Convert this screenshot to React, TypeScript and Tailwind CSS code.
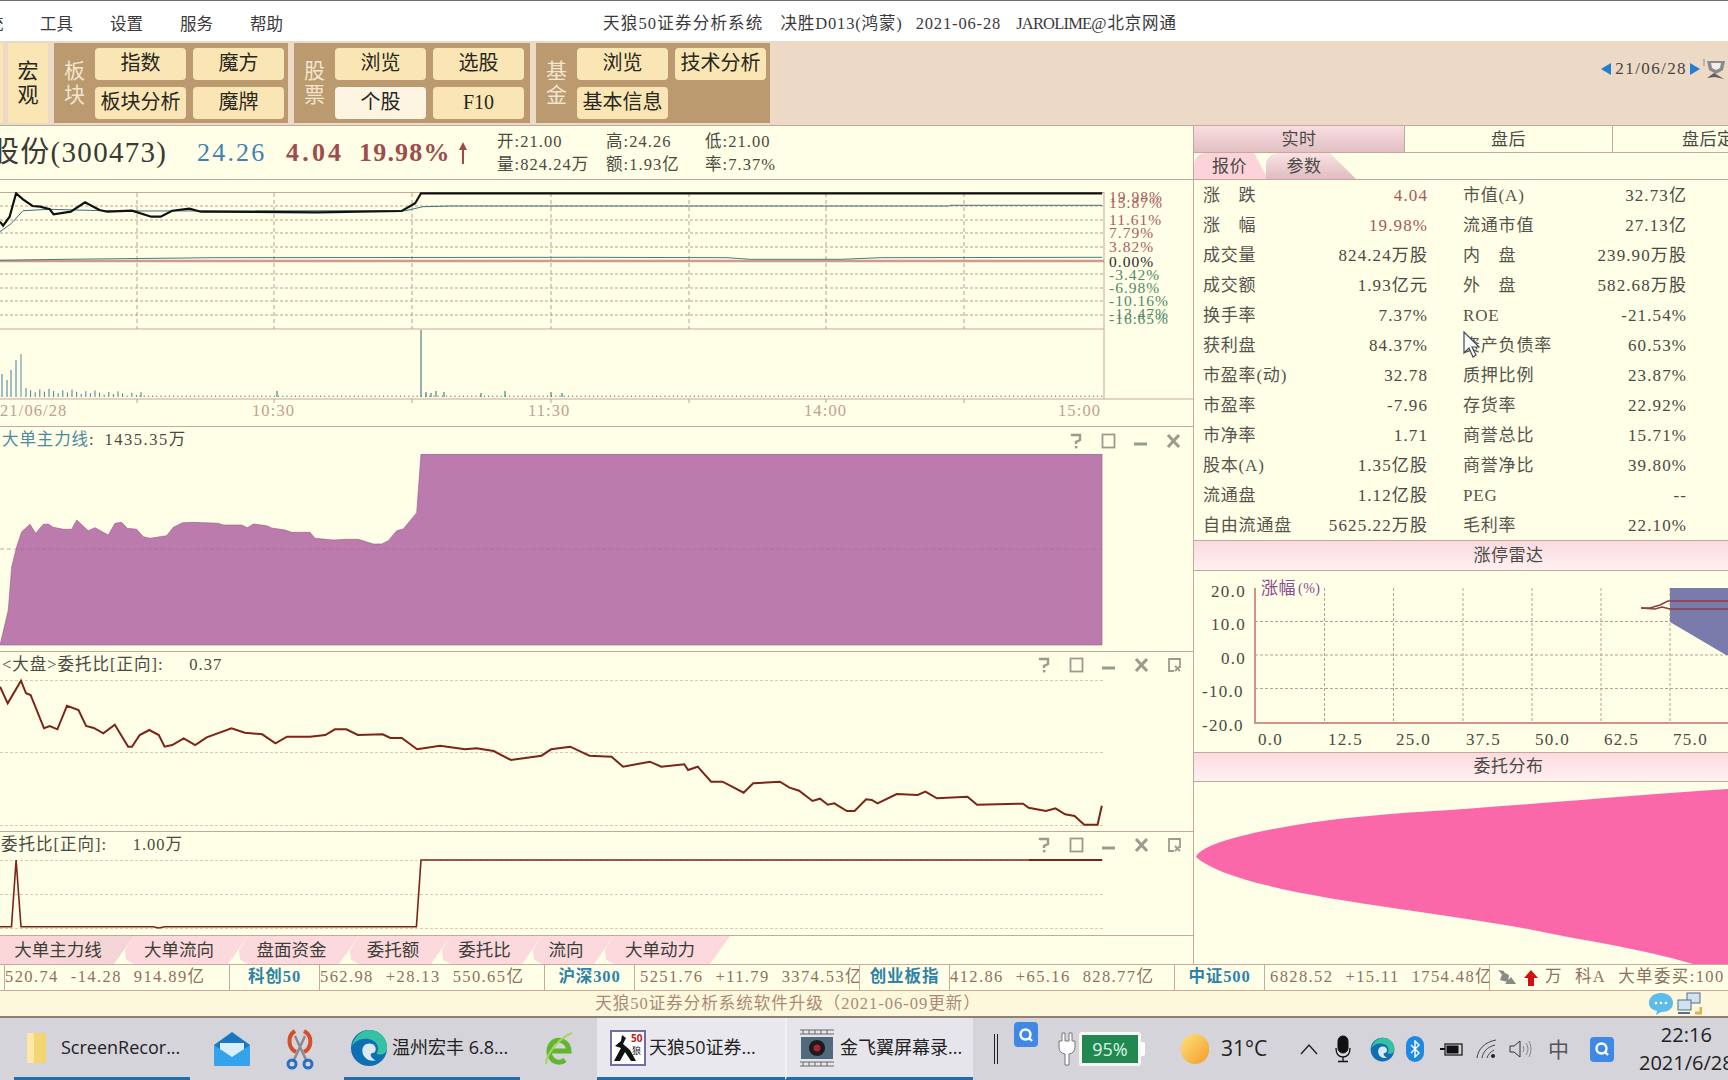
import React from "react"

const scale = (pts: number[][], fx: number, ox: number, oy: number) =>
  pts.map(([x, y]) => `${(x / fx + ox).toFixed(1)},${(y / 3 + oy).toFixed(1)}`).join(" ")

const priceLine = [[0,125],[8,137],[25,110],[42,40],[60,58],[85,78],[105,80],[130,88],[140,103],[185,95],[222,67],[260,90],[280,95],[345,92],[395,110],[420,110],[450,92],[495,86],[525,95],[830,97],[1050,93],[1085,70],[1100,40],[2880,40]]
const avgLine = [[0,155],[30,130],[60,92],[130,88],[200,90],[300,93],[1060,92],[1105,80],[1180,78],[2480,78],[2482,76],[2880,76]]
const zeroLine = [[0,241],[170,238],[560,233],[1520,232],[1900,233],[1960,238],[2200,238],[2300,233],[2880,232]]
const ratioLine = [[0,140],[20,190],[55,122],[68,160],[80,165],[115,265],[130,258],[150,268],[175,197],[205,210],[225,258],[245,264],[270,280],[300,254],[335,320],[345,320],[365,285],[390,270],[415,285],[430,320],[450,315],[480,295],[510,315],[540,292],[605,265],[640,278],[685,283],[720,310],[750,290],[780,290],[810,290],[850,285],[875,268],[905,268],[935,285],[1000,283],[1020,294],[1050,294],[1090,328],[1150,317],[1215,328],[1245,325],[1290,333],[1335,360],[1415,347],[1440,328],[1490,320],[1540,347],[1568,349],[1598,350],[1628,380],[1698,365],[1728,380],[1788,373],[1798,390],[1823,380],[1858,425],[1888,425],[1913,440],[1943,458],[1968,430],[2038,425],[2063,443],[2088,452],[2123,483],[2143,476],[2163,494],[2180,490],[2213,513],[2233,513],[2263,478],[2278,480],[2293,490],[2343,462],[2398,465],[2418,455],[2448,475],[2528,470],[2553,494],[2673,491],[2688,503],[2733,513],[2758,505],[2783,523],[2808,528],[2833,554],[2868,554],[2879,497]]
const flagLine = [[0,860],[30,860],[42,660],[55,860],[400,860],[415,864],[430,860],[1088,860],[1100,660],[2880,660]]
const flowEdge = [[0,465],[25,360],[35,230],[50,170],[65,125],[90,103],[107,130],[130,103],[145,102],[160,112],[190,118],[215,118],[230,90],[265,122],[285,113],[325,135],[345,100],[365,97],[382,115],[410,118],[430,140],[450,145],[500,137],[520,112],[548,98],[580,97],[655,100],[670,105],[725,105],[742,113],[760,102],[800,107],[815,114],[855,120],[875,127],[930,127],[945,145],[1000,150],[1040,148],[1075,148],[1120,162],[1145,162],[1165,152],[1190,122],[1210,117],[1250,68],[1263,-108],[3306,-108],[3306,465]]
const flowArea = flowEdge.map(([x, y]) => `${(x / 3).toFixed(1)},${(490 + y / 3).toFixed(1)}`).join(" ")

const timeX = [137, 274, 412, 551, 689, 826, 964]
const priceY = [206, 220, 233, 247, 274, 288, 301, 315]
const pctLabels: [string, number, string][] = [
  ["19.98%", 202, "#a85f5f"], ["15.87%", 208, "#a85f5f"], ["11.61%", 225, "#a85f5f"], ["7.79%", 238, "#a85f5f"], ["3.82%", 252, "#a85f5f"],
  ["0.00%", 267, "#2b2b2b"], ["-3.42%", 280, "#4f8a6d"], ["-6.98%", 293, "#4f8a6d"], ["-10.16%", 306, "#4f8a6d"], ["-13.47%", 319, "#4f8a6d"], ["-16.65%", 324, "#4f8a6d"],
]
const bigBars = [[2, 374], [7, 380], [11, 370], [16, 360], [21, 354]]
const smallBars = Array.from({ length: 26 }, (_, i) => 26 + i * 4.6)
const dots = Array.from({ length: 230 }, (_, i) => 140 + i * 4.2)
const laterBars = [421, 426, 431, 436, 444, 481, 505, 551, 562, 277]

const quoteRows = [
  ["涨　跌", "4.04", "市值(A)", "32.73亿"],
  ["涨　幅", "19.98%", "流通市值", "27.13亿"],
  ["成交量", "824.24万股", "内　盘", "239.90万股"],
  ["成交额", "1.93亿元", "外　盘", "582.68万股"],
  ["换手率", "7.37%", "ROE", "-21.54%"],
  ["获利盘", "84.37%", "资产负债率", "60.53%"],
  ["市盈率(动)", "32.78", "质押比例", "23.87%"],
  ["市盈率", "-7.96", "存货率", "22.92%"],
  ["市净率", "1.71", "商誉总比", "15.71%"],
  ["股本(A)", "1.35亿股", "商誉净比", "39.80%"],
  ["流通盘", "1.12亿股", "PEG", "--"],
  ["自由流通盘", "5625.22万股", "毛利率", "22.10%"],
]

const bottomTabs = [
  { label: "大单主力线", cls: "w-[134px] pr-[18px] bg-gradient-to-r from-[#fbd7da] to-[#f3d5d5]" },
  { label: "大单流向", cls: "w-[134px] pr-[4px] bg-[#fbd9dc]" },
  { label: "盘面资金", cls: "w-[131px] pr-[4px] bg-[#fbd9dc]" },
  { label: "委托额", cls: "w-[112px] pr-[4px] bg-[#fbd9dc]" },
  { label: "委托比", cls: "w-[111px] pr-[4px] bg-[#fbd9dc]" },
  { label: "流向", cls: "w-[92px] pr-[4px] bg-[#fbd9dc]" },
  { label: "大单动力", cls: "w-[136px] pr-[4px] bg-[#fbd9dc]" },
]

const indexCell = "flex w-[90px] shrink-0 items-center justify-center border-r border-[#c9a998] font-bold tracking-[0.9px] text-[#2e83a8]"
const numberCell = "flex w-[225px] shrink-0 items-center gap-[12px] overflow-hidden whitespace-pre border-r border-[#c9a998]"

function ToolButton({ children, active }: { children: React.ReactNode; active?: boolean }) {
  return (
    <div className={`flex h-[32px] w-[91px] items-center justify-center rounded-[4px] pb-[2px] text-[20px] text-[#2a2620] ${active ? "bg-[#fdf5e2]" : "bg-[#f9e6b4]"}`}>
      {children}
    </div>
  )
}

function ToolGroup({ title, items, w }: { title: string[]; items: { t: string; active?: boolean }[]; w: string }) {
  return (
    <div className={`flex h-[80px] items-center bg-[#ba9a6e] pr-[4px] ${w}`}>
      <div className="flex w-[41px] flex-col items-center text-[21px] leading-[24px] text-[#f3e5cf]">
        {title.map((c) => <span key={c}>{c}</span>)}
      </div>
      <div className="grid grid-cols-[91px_91px] gap-x-[7px] gap-y-[7px]">
        {items.map((b, i) => <ToolButton key={i} active={b.active}>{b.t}</ToolButton>)}
      </div>
    </div>
  )
}

function PanelTools({ extra }: { extra?: boolean }) {
  return (
    <svg width={extra ? 146 : 113} height="18" viewBox={extra ? "0 0 146 18" : "0 0 113 18"} fill="none" stroke="#9b9b90" className="block">
      <path d="M3 4 V3 H11 V8 L7 10 V12" strokeWidth="2.4" />
      <rect x="6" y="14" width="2.4" height="2.4" fill="#9b9b90" stroke="none" />
      <rect x="33.5" y="2.5" width="12" height="13" strokeWidth="1.8" />
      <path d="M65 12 H78" strokeWidth="3" />
      <path d="M99 3 L110 15 M110 3 L99 15" strokeWidth="3" />
      {extra && <path d="M143 12 V3 H132 V15 H137 M138 10 L143 15 M138 15 L143 10" strokeWidth="1.8" />}
    </svg>
  )
}

function EdgeIcon({ size }: { size: number }) {
  return (
    <svg width={size} height={size} viewBox="0 0 40 40">
      <circle cx="20" cy="20" r="19" fill="#0f6fb3" />
      <path d="M2 18 C5 6 14 1 21 1 C32 1 39 10 39 20 C39 27 32 28 28 26 C31 22 30 15 24 12 C16 8 6 11 2 18Z" fill="#35c1a3" />
      <path d="M13 23 C13 17 18 14 24 16 C28 18 28 24 25 25 C20 25 21 30 27 33 C20 35 13 30 13 23Z" fill="#dbe9f2" />
    </svg>
  )
}

function App() {
  return (
    <div className="flex h-[1080px] w-[1728px] flex-col overflow-hidden bg-[#fffee6] text-[#4a4a44] [font-family:'Liberation_Serif','Noto_Sans_CJK_SC',serif]">
      {/* title bar */}
      <div className="relative flex h-[41px] shrink-0 items-center border-t border-[#6e6e6e] bg-white pt-[8px] text-[16.5px] text-[#3a3a3a]">
        <span className="-ml-[13px] w-[53px]">统</span>
        <div className="flex gap-[37px]">
          <span>工具</span><span>设置</span><span>服务</span><span>帮助</span>
        </div>
        <div className="absolute left-[603px] top-[11px] flex whitespace-pre tracking-[0.85px]">
          <span className="tracking-[1.2px]">天狼50证券分析系统</span>
          <span className="ml-[17px]">决胜D013(鸿蒙)</span>
          <span className="ml-[13px]">2021-06-28</span>
          <span className="ml-[15px] tracking-[-0.8px]">JAROLIME</span>
          <span>@北京网通</span>
        </div>
      </div>

      {/* toolbar */}
      <div className="flex h-[84px] shrink-0 items-start gap-[6px] bg-[#ecd9c6] pt-[2px]">
        <div className="h-[80px] w-[3px] bg-[#f9e6b4]" />
        <div className="-ml-[1px] flex h-[80px] w-[40px] flex-col items-center justify-center bg-[#f9e6b4] text-[21px] leading-[24px] text-[#2a2620]">
          <span>宏</span><span>观</span>
        </div>
        <ToolGroup title={["板", "块"]} w="w-[234px]" items={[{ t: "指数" }, { t: "魔方" }, { t: "板块分析" }, { t: "魔牌" }]} />
        <ToolGroup title={["股", "票"]} w="w-[236px]" items={[{ t: "浏览" }, { t: "选股" }, { t: "个股", active: true }, { t: "F10" }]} />
        <div className="flex h-[80px] w-[234px] items-center bg-[#ba9a6e]">
          <div className="flex w-[41px] flex-col items-center text-[21px] leading-[24px] text-[#f3e5cf]">
            <span>基</span><span>金</span>
          </div>
          <div className="grid grid-cols-[91px_91px] gap-x-[7px] gap-y-[7px]">
            <ToolButton>浏览</ToolButton>
            <ToolButton>技术分析</ToolButton>
            <ToolButton>基本信息</ToolButton>
          </div>
        </div>
        <div className="ml-auto mt-[13px] flex items-center text-[17px] tracking-[1.4px] text-[#444]">
          <svg width="10" height="12" viewBox="0 0 10 12" className="mr-[4px]"><path d="M10 0 V12 L0 6Z" fill="#1f7fd6" /></svg>
          <span>21/06/28</span>
          <svg width="10" height="12" viewBox="0 0 10 12" className="ml-[3px]"><path d="M0 0 V12 L10 6Z" fill="#1f7fd6" /></svg>
          <svg width="24" height="24" viewBox="0 0 24 24" className="ml-[3px] mr-[1px]">
            <path d="M1 2 V9" stroke="#777" strokeWidth="0.8" />
            <path d="M4 4 H22 L20 13 L13 17 L6 13Z" fill="#8a8a8a" />
            <path d="M8 6 H18 L17 11 L13 13 L9 11Z" fill="#f1efe8" />
            <path d="M4 21 L11 16 L21 22 L12 20Z" fill="#5f5f5f" />
          </svg>
        </div>
      </div>

      {/* main area */}
      <div className="flex h-[839px] shrink-0">
        <div className="flex w-[1194px] shrink-0 flex-col border-r border-[#c4a898]">
          <div className="flex h-[55px] shrink-0 items-center overflow-hidden border-y border-[#c4a898]">
            <span className="-ml-[10px] w-[207px] shrink-0 whitespace-pre text-[29px] tracking-[1.3px] text-[#3a3a34]">股份(300473)</span>
            <span className="w-[89px] shrink-0 text-[26px] tracking-[2.2px] text-[#3d82b5]">24.26</span>
            <span className="w-[73px] shrink-0 text-[26px] font-semibold tracking-[3.2px] text-[#9e4c4c]">4.04</span>
            <span className="w-[100px] shrink-0 text-[26px] font-semibold tracking-[1.2px] text-[#9e4c4c]">19.98%</span>
            <svg width="12" height="24" viewBox="0 0 12 24" className="-ml-[2px] mr-[30px] shrink-0"><path d="M6 1 L10 9 H7 V23 H5 V9 H2Z" fill="#a04848" /></svg>
            <div className="-ml-[2px] grid grid-cols-[109px_99px_100px] text-[16.5px] leading-[23px] tracking-[1.05px] text-[#4a4a40]">
              <span>开:21.00</span><span>高:24.26</span><span>低:21.00</span>
              <span>量:824.24万</span><span>额:1.93亿</span><span>率:7.37%</span>
            </div>
          </div>
          <div className="h-[12px] shrink-0" />

          {/* price + volume chart */}
          <div className="h-[235px] shrink-0 border-b border-[#c4a898]">
            <svg width="1193" height="235" viewBox="0 192 1193 235" className="block">
              <path d="M0 192.5 H1104 M0 329 H1104 M0 399 H1193 M1104 192 V399" stroke="#c4a898" fill="none" />
              {priceY.map((y) => <path key={y} d={`M0 ${y} H1104`} stroke="#b9a28c" strokeDasharray="3 2" />)}
              {timeX.map((x) => <path key={x} d={`M${x} 193 V329 M${x} 399 V405`} stroke="#b9a28c" strokeDasharray="4 3" />)}
              <path d="M0 261 H1104" stroke="#cf9a90" strokeWidth="2.5" />
              <polyline points={scale(zeroLine, 2.613, 0, 180)} fill="none" stroke="#4d7d7a" strokeWidth="1" />
              <polyline points={scale(avgLine, 2.613, 0, 180)} fill="none" stroke="#3d6f80" strokeWidth="1" />
              <polyline points={scale(priceLine, 2.613, 0, 180)} fill="none" stroke="#111" strokeWidth="2.2" />
              {bigBars.map(([x, y]) => <path key={x} d={`M${x} 397 V${y}`} stroke={x === 21 ? "#5a8aa0" : "#3f7f9f"} />)}
              {smallBars.map((x, i) => <path key={x} d={`M${x} 397 V${388 + (i * 7) % 5 + i / 6}`} stroke="#4a7f95" />)}
              {dots.map((x) => <path key={x} d={`M${x} 397 V395.6`} stroke="#5a7f8a" />)}
              {laterBars.map((x, i) => <path key={x} d={`M${x} 397 V${i === 0 ? 330 : 391 + (i % 3)}`} stroke="#2f6676" />)}
              {[["21/06/28", 0], ["10:30", 252], ["11:30", 528], ["14:00", 804], ["15:00", 1058]].map(([t, x]) => (
                <text key={t} x={x} y="416" fontSize="16.5" fill="#c4a08e" letterSpacing="1.1">{t}</text>
              ))}
              {pctLabels.map(([t, y, c]) => <text key={t} x="1109" y={y} fontSize="15.5" fill={c} letterSpacing="1">{t}</text>)}
            </svg>
          </div>

          {/* 大单主力线 */}
          <div className="h-[225px] shrink-0 border-b border-[#c4a898]">
            <div className="flex h-[27px] items-center justify-between pr-[11px] text-[16.5px]">
              <span className="whitespace-pre pl-[2px] tracking-[0.9px]"><span className="text-[#4a8ba3]">大单主力线</span>:  <span className="tracking-[1.5px]">1435.35万</span></span>
              <PanelTools />
            </div>
            <svg width="1193" height="197" viewBox="0 454 1193 197" className="block">
              <polygon points={flowArea} fill="#bb7bad" stroke="#9a5a80" strokeWidth="0.6" />
              <path d="M0 549 H1102" stroke="#a9688f" strokeDasharray="4 3" strokeOpacity="0.6" />
            </svg>
          </div>

          {/* 委托比 */}
          <div className="h-[180px] shrink-0 border-b border-[#c4a898]">
            <div className="flex h-[26px] items-center justify-between pr-[10px] text-[16.5px]">
              <span className="whitespace-pre pl-[2px] tracking-[1px]">{"<大盘>委托比[正向]:     0.37"}</span>
              <PanelTools extra />
            </div>
            <svg width="1193" height="153" viewBox="0 678 1193 153" className="block">
              {[680.5, 752.5, 825.5].map((y) => <path key={y} d={`M0 ${y} H1104`} stroke="#d6cbb4" strokeDasharray="3 2" />)}
              <polyline points={scale(ratioLine, 2.613, 0, 640)} fill="none" stroke="#7d2418" strokeWidth="2" />
            </svg>
          </div>

          <div className="h-[104px] shrink-0 border-b border-[#c4a898]">
            <div className="flex h-[26px] items-center justify-between pr-[10px] text-[16.5px]">
              <span className="whitespace-pre pl-[1px] tracking-[1px]">{"委托比[正向]:     1.00万"}</span>
              <PanelTools extra />
            </div>
            <svg width="1193" height="77" viewBox="0 858 1193 77" className="block">
              {[860.5, 894.5, 928.5].map((y) => <path key={y} d={`M0 ${y} H1104`} stroke="#d6cbb4" strokeDasharray="3 2" />)}
              <polyline points={scale(flagLine, 2.613, 0, 640)} fill="none" stroke="#7d2418" strokeWidth="1.6" />
              <path d="M1029 860 H1102" stroke="#7d2418" strokeWidth="2.2" />
            </svg>
          </div>

          {/* tabs */}
          <div className="flex h-[28px] shrink-0 overflow-hidden text-[17.5px] text-[#3d3d38]">
            {bottomTabs.map((t, i) => (
              <div
                key={t.label}
                className={`-mr-[20px] flex h-full shrink-0 items-center justify-center ${t.cls} ${i === 0 ? "[clip-path:polygon(0_0,100%_0,calc(100%-20px)_100%,0_100%)]" : "[clip-path:polygon(20px_0,100%_0,calc(100%-20px)_100%,20px_100%,12px_85%,11px_50%)]"}`}
              >
                {t.label}
              </div>
            ))}
          </div>
        </div>

        {/* right panel */}
        <div className="relative flex min-w-0 flex-1 flex-col overflow-hidden text-[17px] tracking-[0.5px]">
          <div className="flex h-[28px] shrink-0 border-y border-[#c4a898] text-[#4a4a44]">
            <div className="flex w-[211px] shrink-0 items-center justify-center border-r border-[#c4a898] bg-gradient-to-b from-[#f9dde1] to-[#e2bfc3] pt-[2px]">实时</div>
            <div className="flex w-[208px] shrink-0 items-center justify-center border-r border-[#c4a898] pt-[2px]">盘后</div>
            <div className="flex w-[208px] shrink-0 items-center justify-center pt-[2px]">盘后定价</div>
          </div>
          <div className="flex h-[27px] shrink-0 border-b border-[#c4a898] text-[#4a4a44]">
            <div className="flex w-[74px] items-center justify-center rounded-tl-[12px] bg-[#fbd3d8] pr-[3px] pt-[2px] [clip-path:polygon(0_0,60px_0,100%_100%,0_100%)]">报价</div>
            <div className="-ml-[2px] flex w-[90px] items-center justify-center rounded-tl-[12px] bg-gradient-to-b from-[#fbe3e5] to-[#dfbcc0] pr-[14px] pt-[2px] [clip-path:polygon(0_0,64px_0,100%_100%,0_100%)]">参数</div>
          </div>
          <div className="h-[361px] shrink-0 border-b border-[#c4a898] pl-[9px] pt-[1px]">
            {quoteRows.map((r, i) => (
              <div key={i} className="grid h-[30px] grid-cols-[225px_224px] items-center gap-x-[35px]">
                <div className="flex justify-between">
                  <span className="tracking-[0.8px] text-[#55554e]">{r[0]}</span>
                  <span className={`tracking-[1.1px] ${i < 2 ? "text-[#a55a5a]" : "text-[#4a4a44]"}`}>{r[1]}</span>
                </div>
                <div className="flex justify-between">
                  <span className="tracking-[0.8px] text-[#55554e]">{r[2]}</span>
                  <span className="tracking-[1.1px] text-[#4a4a44]">{r[3]}</span>
                </div>
              </div>
            ))}
          </div>
          {/* mouse pointer */}
          <svg width="18" height="28" viewBox="0 0 18 28" className="absolute left-[269px] top-[206px]">
            <path d="M1 1 V22 L6 17 L10 26 L13 24 L9 16 L16 16Z" fill="#fff" stroke="#3f4a55" strokeWidth="1.2" />
          </svg>

          <div className="flex h-[30px] shrink-0 items-center justify-center border-b border-[#c4a898] bg-gradient-to-b from-[#fbdbe0] to-[#fff0f1] pl-[95px] text-[#4a4a44]">涨停雷达</div>
          <div className="h-[182px] shrink-0 border-b border-[#c4a898]">
            <svg width="534" height="181" viewBox="1194 571 534 181" className="block">
              {[621.5, 655, 688.5].map((y) => <path key={y} d={`M1255 ${y} H1728`} stroke="#b9a28c" strokeDasharray="3 2" />)}
              {[1324.5, 1393.5, 1463, 1532, 1601, 1670].map((x) => <path key={x} d={`M${x} 588 V722`} stroke="#b9a28c" strokeDasharray="3 2" />)}
              <polygon points="1670,588 1728,588 1728,655 1726,655 1670,622" fill="#7a7bab" />
              <path d="M1641 608 H1650 L1660 605 L1668 601 H1728" fill="none" stroke="#8a3f45" strokeWidth="1.5" />
              <path d="M1641 608 L1655 609 L1662 607 L1670 609 H1728" fill="none" stroke="#8a3f45" strokeWidth="1.5" />
              <path d="M1255 588 V723 H1728" fill="none" stroke="#cf9388" strokeWidth="2" />
              <text x="1261" y="594" fontSize="17" fill="#8a4a96">涨幅</text>
              <text x="1298" y="593" fontSize="14" fill="#8a4a96">(%)</text>
              {[["20.0", 1211, 597], ["10.0", 1211, 630], ["0.0", 1221, 664], ["-10.0", 1202, 697], ["-20.0", 1202, 731]].map(([t, x, y]) => (
                <text key={t} x={x} y={y} fontSize="17" fill="#4a4a44" letterSpacing="1.3">{t}</text>
              ))}
              {["0.0", "12.5", "25.0", "37.5", "50.0", "62.5", "75.0"].map((t, i) => (
                <text key={t} x={[1258, 1328, 1396, 1466, 1535, 1604, 1673][i]} y="745" fontSize="17" fill="#4a4a44" letterSpacing="1.3">{t}</text>
              ))}
            </svg>
          </div>
          <div className="flex h-[29px] shrink-0 items-center justify-center border-b border-[#c4a898] bg-gradient-to-b from-[#fbdbe0] to-[#fff0f1] pl-[95px] text-[#4a4a44]">委托分布</div>
          <svg width="534" height="182" viewBox="1194 782 534 182" className="block shrink-0">
            <path d="M1196 857 C1200 846 1240 832 1330 820 C1400 812 1440 811 1464 809 C1560 802 1650 794 1728 789 V964 H1693 C1640 948 1590 942 1533 930 C1420 908 1240 895 1196 857Z" fill="#fb68aa" />
          </svg>
        </div>
      </div>

      {/* ticker */}
      <div className="flex h-[27px] shrink-0 overflow-hidden border-y border-[#c9a998] text-[16.5px] tracking-[1.4px] text-[#8c7260]">
        <div className="w-[5px] shrink-0 border-r border-[#c9a998]" />
        <div className={numberCell}><span>520.74</span><span>-14.28</span><span>914.89亿</span></div>
        <div className={indexCell}>科创50</div>
        <div className={numberCell}><span>562.98</span><span>+28.13</span><span>550.65亿</span></div>
        <div className={indexCell}>沪深300</div>
        <div className={`${numberCell} pl-[5px]`}><span>5251.76</span><span>+11.79</span><span>3374.53亿</span></div>
        <div className={indexCell}>创业板指</div>
        <div className={numberCell}><span>412.86</span><span>+65.16</span><span>828.77亿</span></div>
        <div className={indexCell}>中证500</div>
        <div className={`${numberCell} pl-[5px]`}><span>6828.52</span><span>+15.11</span><span>1754.48亿</span></div>
        <div className="flex min-w-0 flex-1 items-center overflow-hidden whitespace-pre pl-[7px]">
          <svg width="20" height="18" viewBox="0 0 20 18" className="mr-[6px] shrink-0"><path d="M1 1 L7 2 L9 10 Z M3 11 L6 3 L12 6 L11 13Z M8 15 L14 8 L19 15Z" fill="#8a8a84" /></svg>
          <svg width="16" height="18" viewBox="0 0 16 18" className="mr-[6px] shrink-0"><path d="M8 1 L15 9 H11 V17 H5 V9 H1Z" fill="#d20f0f" /></svg>
          <span className="mr-[12px]">万</span><span className="mr-[12px]">科A</span><span>大单委买:100</span>
        </div>
      </div>

      {/* status */}
      <div className="flex h-[27px] shrink-0 items-center border-b-2 border-[#8f8074] bg-[#fdf7dc] pr-[26px] pt-[1px] text-[16.5px] tracking-[1px] text-[#a98a78]">
        <div className="flex-1 pr-[72px] text-center">天狼50证券分析系统软件升级（2021-06-09更新）</div>
        <svg width="26" height="24" viewBox="0 0 26 24" className="mr-[2px]"><path d="M13 1 C20 1 25 5 25 11 C25 17 20 20 13 20 L8 23 L9 19 C4 18 1 15 1 11 C1 5 6 1 13 1Z" fill="#5cbcea" /><circle cx="8" cy="11" r="1.3" fill="#fff" /><circle cx="13" cy="11" r="1.3" fill="#fff" /><circle cx="18" cy="11" r="1.3" fill="#fff" /></svg>
        <svg width="26" height="24" viewBox="0 0 26 24" fill="#cfe2ee" stroke="#55708a"><rect x="11" y="1" width="13" height="10" /><rect x="2" y="8" width="13" height="10" /><path d="M2 21 H14" strokeWidth="2" /><path d="M19 21 H25 V15" stroke="#e0b050" strokeWidth="3" fill="none" /></svg>
      </div>

      {/* taskbar */}
      <div className="flex h-[62px] shrink-0 items-center bg-[#d5d4da] [font-family:'Open_Sans','Noto_Sans_CJK_SC',sans-serif] text-[18px] text-[#222]">
        <div className="ml-[14px] flex h-full w-[176px] shrink-0 items-center border-b-[3px] border-[#1f6fb0] pl-[12px]">
          <svg width="22" height="34" viewBox="0 0 22 34" className="mr-[13px] shrink-0"><rect x="1" y="2" width="19" height="30" rx="2" fill="#f3d671" /><rect x="1" y="2" width="7" height="30" fill="#fbe9a8" /></svg>
          <span>ScreenRecor...</span>
        </div>
        <div className="flex h-full w-[84px] shrink-0 items-center justify-center">
          <svg width="38" height="36" viewBox="0 0 38 36"><path d="M1 14 L19 1 L37 14 V33 Q37 35 35 35 H3 Q1 35 1 33Z" fill="#1a78c2" /><path d="M7 12 H31 V20 L19 27 L7 20Z" fill="#d8eefb" /><path d="M1 14 L19 26 L37 14 V33 Q37 35 35 35 H3 Q1 35 1 33Z" fill="#35a3ea" /></svg>
        </div>
        <div className="flex h-full w-[70px] shrink-0 items-center pl-[11px]">
          <svg width="30" height="42" viewBox="0 0 30 42" fill="none"><path d="M10 3 C2 8 3 20 11 24 M19 3 C28 8 27 20 19 24" stroke="#d2502c" strokeWidth="4" /><path d="M10 8 L22 34 M20 8 L8 34" stroke="#8a8a90" strokeWidth="2.5" /><circle cx="7" cy="36" r="4" stroke="#2a6fc0" strokeWidth="3" /><circle cx="23" cy="36" r="4" stroke="#2a6fc0" strokeWidth="3" /></svg>
        </div>
        <div className="flex h-full w-[176px] shrink-0 items-center border-b-[3px] border-[#1f6fb0] pl-[6px]">
          <span className="mr-[4px] shrink-0"><EdgeIcon size={38} /></span>
          <span className="whitespace-pre">温州宏丰 6.8...</span>
        </div>
        <div className="flex h-full w-[77px] shrink-0 items-center justify-center">
          <svg width="32" height="36" viewBox="0 0 32 36" fill="none"><path d="M8 20 H26 A10 11 0 1 0 22 29" stroke="#62b52f" strokeWidth="5" /><path d="M3 33 C3 22 18 6 29 2" stroke="#a9d45f" strokeWidth="2" /></svg>
        </div>
        <div className="flex h-full w-[188px] shrink-0 items-center border-b-[3px] border-[#1f6fb0] bg-[#e9e8ee] pl-[13px]">
          <svg width="36" height="36" viewBox="0 0 36 36" className="mr-[3px] shrink-0">
            <rect x="1" y="1" width="34" height="34" fill="#fff" stroke="#7a6ca0" strokeWidth="2" />
            <path d="M12 5 L16 8 L13 14 L20 20 L26 31 L21 31 L15 22 L10 31 L4 31 L11 18 L5 16 L11 11Z" fill="#111" />
            <text x="21" y="12" fontSize="10" fontWeight="700" fill="#c81818">50</text>
            <text x="22" y="24" fontSize="9" fill="#222">狼</text>
          </svg>
          <span className="whitespace-pre">天狼50证券...</span>
        </div>
        <div className="flex h-full w-[188px] shrink-0 items-center border-b-[3px] border-l-2 border-[#1f6fb0] border-l-[#f2f2f6] bg-[#e6e5eb] pl-[12px]">
          <svg width="36" height="40" viewBox="0 0 36 40" className="mr-[5px] shrink-0">
            <path d="M1 2 H35 M1 6 H35 M1 34 H35 M1 38 H35" stroke="#666" />
            <path d="M4 2 V6 M10 2 V6 M16 2 V6 M22 2 V6 M28 2 V6 M4 34 V38 M10 34 V38 M16 34 V38 M22 34 V38 M28 34 V38" stroke="#666" />
            <rect x="2" y="9" width="32" height="22" fill="#50697c" />
            <circle cx="18" cy="20" r="8" fill="#201a1c" />
            <circle cx="18" cy="20" r="3.5" fill="#a8242e" />
          </svg>
          <span className="whitespace-pre">金飞翼屏幕录...</span>
        </div>

        <div className="relative ml-[21px] h-[30px] w-[4px] shrink-0 border-x border-[#222]" />
        <div className="relative mb-[29px] ml-[16px] flex h-[25px] w-[24px] shrink-0 items-center justify-center rounded-[4px] bg-[#3f88e6]">
          <svg width="16" height="16" viewBox="0 0 16 16" fill="none" stroke="#fff" strokeWidth="2.4"><circle cx="7.5" cy="7.5" r="5" /><path d="M11 11 L14 14" /></svg>
        </div>
        <svg width="22" height="36" viewBox="0 0 22 36" className="ml-[18px] shrink-0" fill="#fff" stroke="#777"><path d="M6 2 V10 H3 V16 Q3 22 9 23 V34 H13 V23 Q19 22 19 16 V10 H16 V2 H13 V10 H9 V2Z" /></svg>
        <div className="ml-[1px] flex h-[34px] w-[62px] shrink-0 items-center justify-center rounded-[3px] border-[3px] border-[#f7f7f7] bg-[#21894f] text-[18px] text-[#dff5e6]">95%</div>
        <div className="h-[14px] w-[4px] shrink-0 rounded-r-[2px] bg-white" />
        <div className="ml-[36px] h-[30px] w-[28px] shrink-0 rounded-full bg-gradient-to-br from-[#fbe27a] to-[#f39c1f]" />
        <span className="ml-[12px] w-[62px] shrink-0 text-[21px]">31°C</span>
        <svg width="18" height="12" viewBox="0 0 18 12" className="ml-[17px] shrink-0" fill="none" stroke="#222" strokeWidth="1.4"><path d="M1 11 L9 2 L17 11" /></svg>
        <svg width="16" height="28" viewBox="0 0 16 28" className="ml-[17px] shrink-0" fill="none" stroke="#111"><rect x="3" y="1" width="10" height="17" rx="5" fill="#111" /><path d="M1 13 Q1 22 8 22 Q15 22 15 13 M8 22 V26 M3 26.5 H13" strokeWidth="1.3" /></svg>
        <span className="ml-[19px] shrink-0"><EdgeIcon size={25} /></span>
        <div className="ml-[11px] flex h-[26px] w-[18px] shrink-0 items-center justify-center rounded-[9px] bg-[#1f88e0]">
          <svg width="10" height="18" viewBox="0 0 10 18" fill="none" stroke="#fff" strokeWidth="1.4"><path d="M1 5 L9 13 L5 17 V1 L9 5 L1 13" /></svg>
        </div>
        <svg width="24" height="16" viewBox="0 0 24 16" className="ml-[15px] shrink-0" fill="none" stroke="#111"><path d="M1 8 H6" strokeWidth="2" /><rect x="6" y="3" width="17" height="11" strokeWidth="1.2" /><rect x="8" y="5" width="11" height="7" fill="#111" /></svg>
        <svg width="22" height="20" viewBox="0 0 22 20" className="ml-[13px] shrink-0" fill="none" stroke="#444"><path d="M1 19 C2 10 9 3 20 1 M6 19 C7 13 11 8 19 6 M11 19 C12 16 14 13 18 11" /><circle cx="17" cy="17" r="2" fill="#222" stroke="none" /></svg>
        <svg width="24" height="20" viewBox="0 0 24 20" className="ml-[11px] shrink-0" fill="none" stroke="#333"><path d="M1 7 V13 H5 L11 18 V2 L5 7Z" /><path d="M14 7 Q16 10 14 13 M17 4 Q21 10 17 16 M20 2 Q24 10 20 18" stroke="#888" /></svg>
        <span className="ml-[15px] w-[22px] shrink-0 text-[21px] leading-none text-[#555]">中</span>
        <div className="ml-[20px] flex h-[25px] w-[24px] shrink-0 items-center justify-center rounded-[4px] bg-[#3f88e6]">
          <svg width="16" height="16" viewBox="0 0 16 16" fill="none" stroke="#fff" strokeWidth="2.4"><circle cx="7.5" cy="7.5" r="5" /><path d="M11 11 L14 14" /></svg>
        </div>
        <div className="ml-[25px] flex shrink-0 flex-col items-center whitespace-pre text-[20px] leading-[28px]">
          <span>22:16</span>
          <span>2021/6/28</span>
        </div>
      </div>
    </div>
  )
}

export default App
